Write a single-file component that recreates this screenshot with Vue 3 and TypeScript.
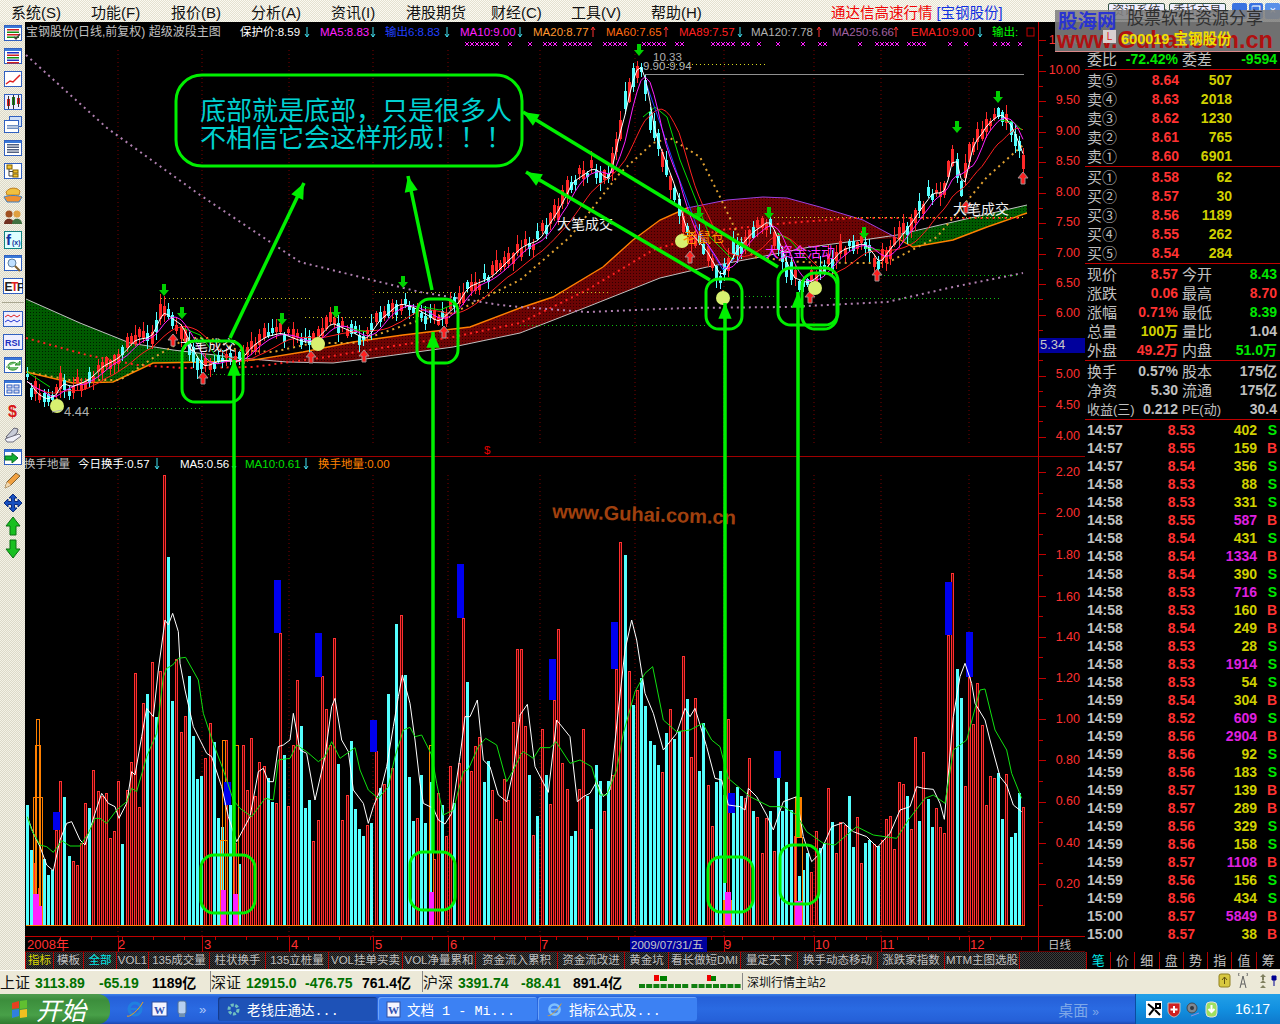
<template>
  <div class="screen">
    <header class="menu">
      <span v-for="m in menus" :key="m" class="menu-item">{{ m }}</span>
      <span class="app-title">通达信高速行情 <b>[宝钢股份]</b></span>
      <span class="menu-btn first">资讯系统</span>
      <span class="menu-btn">委托交易</span>
      <span class="win-btn">_</span>
      <span class="win-btn">❐</span>
      <span class="win-btn close">×</span>
    </header>

    <div class="body">
      <aside class="toolbar">
        <template v-for="(icon, i) in icons" :key="i">
          <div v-if="i === 12" class="tool-sep"></div>
          <svg class="tool" viewBox="0 0 20 20" width="20" height="20">
            <component :is="s.tag" v-for="(s, j) in icon" :key="j" v-bind="s.attrs">{{ s.text }}</component>
          </svg>
        </template>
      </aside>

      <div class="workspace">
        <div class="upper">
          <svg class="chart" viewBox="25 22 1060 930" width="1060" height="930">
            <defs>
              <pattern id="dRed" width="3" height="3" patternUnits="userSpaceOnUse">
                <rect width="3" height="3" fill="#6c0404" />
                <rect width="1" height="1" fill="#300000" />
              </pattern>
              <pattern id="dGreen" width="3" height="3" patternUnits="userSpaceOnUse">
                <rect width="3" height="3" fill="#005a00" />
                <rect width="1" height="1" fill="#001c00" />
              </pattern>
            </defs>
            <rect x="25" y="22" width="1060" height="930" fill="#000" />

            <!-- grid -->
            <line v-for="x in gridX" :key="'g' + x" :x1="x" :x2="x" y1="50" y2="445" class="grid" />
            <line v-for="x in gridX" :key="'h' + x" :x1="x" :x2="x" y1="475" y2="936" class="grid" />

            <!-- bands -->
            <polygon :points="bandGreenA" fill="url(#dGreen)" />
            <polygon :points="bandRed" fill="url(#dRed)" />
            <polygon :points="bandGreenB" fill="url(#dGreen)" />
            <polyline :points="grayLine" class="ln" stroke="#c0c0c0" />
            <polyline :points="orangeLine" class="ln" stroke="#ff8000" stroke-width="1.4" />
            <polyline :points="orangeTail" class="ln" stroke="#ff8000" stroke-width="1.4" />
            <polyline :points="purpleLine" class="ln" stroke="#9a40e0" />
            <polyline :points="redDots" class="dots" stroke="#ff2020" />
            <polyline :points="plumDots" class="dots" stroke="#b080b0" />
            <polyline :points="ochreDots" class="dots" stroke="#e0a030" />

            <line v-for="(d, i) in levels" :key="'l' + i" :x1="d[0]" :x2="d[1]" :y1="d[2]" :y2="d[2]" :stroke="d[3] as string" class="level" />
            <line x1="645" x2="1024" y1="74.5" y2="74.5" stroke="#909090" />

            <!-- candles -->
            <g shape-rendering="crispEdges">
              <g v-for="c in candles" :key="c.x">
                <line :x1="c.x + 0.5" :x2="c.x + 0.5" :y1="c.hi" :y2="c.lo" :stroke="c.color" />
                <rect :x="c.x - 1" :y="c.top" width="3" :height="c.h" :fill="c.color" />
              </g>
            </g>
            <polyline :points="ma20" class="ln" stroke="#ff2020" />
            <polyline v-for="(s, i) in greenBits" :key="'gb' + i" :points="s" class="ln" stroke="#00e000" />
            <polyline :points="blueLine" class="ln" stroke="#2040ff" />
            <polyline :points="ma10" class="ln" stroke="#ff20ff" />
            <polyline :points="ma5" class="ln" stroke="#fff" />

            <g v-for="(p, i) in crosses" :key="'x' + i" class="cross">
              <path :d="`M${p - 2} 42l4 4m0 -4l-4 4`" />
            </g>

            <!-- signals -->
            <polygon v-for="(p, i) in sellMarks" :key="'s' + i" :points="downArrow(p[0], p[1])" fill="#00d000" />
            <polygon v-for="(p, i) in buyMarks" :key="'b' + i" :points="upArrow(p[0], p[1])" fill="#ff2020" stroke="#a09090" />
            <g v-for="(p, i) in apples" :key="'a' + i">
              <path :d="`M${p[0]} ${p[1] - 8}v3`" stroke="#a06020" stroke-width="2" />
              <circle :cx="p[0]" :cy="p[1]" r="7" fill="#d8f070" />
            </g>

            <text x="557" y="229" class="t big white">大笔成交</text>
            <text x="953" y="214" class="t big white">大笔成交</text>
            <text x="180" y="350" class="t big white">大笔成交</text>
            <text x="683" y="242" class="t big" fill="#ff9000">老鼠仓</text>
            <text x="765" y="257" class="t big" fill="#ff30ff">大资金活动</text>
            <text x="64" y="416" class="t mid" fill="#b0b0b0">4.44</text>
            <path d="M52 412l10 -2" stroke="#b0b0b0" />
            <text x="653" y="61" class="t small" fill="#b0b0b0">10.33</text>
            <text x="643" y="70" class="t small" fill="#b0b0b0">9.90-9.94</text>
            <text x="484" y="454" class="t small" fill="#e00000">$</text>

            <!-- legends -->
            <text x="26" y="36" class="t title" fill="#c0c0c0">宝钢股份(日线,前复权) 超级波段主图</text>
            <g v-for="l in legend" :key="l.x">
              <text :x="l.x" y="36" class="t small" :fill="l.color">{{ l.label }}</text>
              <template v-if="l.ax">
                <path :d="`M${l.ax} 27v10`" :stroke="l.up ? '#ff3030' : '#40e0f0'" />
                <path :d="l.up ? `M${l.ax - 2} 30l2 -3l2 3` : `M${l.ax - 2} 34l2 3l2 -3`" fill="none" :stroke="l.up ? '#ff3030' : '#40e0f0'" />
              </template>
            </g>
            <rect x="1027" y="28" width="7" height="8" fill="none" stroke="#c00000" />

            <line x1="25" x2="1085" y1="456.5" y2="456.5" stroke="#a00000" />

            <g v-for="l in lowerLegend" :key="l.x">
              <text :x="l.x" y="468" class="t small" :fill="l.color">{{ l.label }}</text>
              <template v-if="l.ax">
                <path :d="`M${l.ax} 458v11M${l.ax - 2} 466l2 3l2 -3`" fill="none" stroke="#40e0f0" />
              </template>
            </g>

            <!-- volume -->
            <g shape-rendering="crispEdges">
              <template v-for="b in volume" :key="b.x">
                <rect v-if="b.red" :x="b.x - 0.5" :y="925.5 - b.h" width="2" :height="b.h" fill="#500000" stroke="#ff3030" />
                <rect v-else :x="b.x - 1" :y="925 - b.h" width="3" :height="b.h" fill="#54ffff" />
              </template>
              <rect v-for="(r, i) in orangeBars" :key="'o' + i" :x="r[0] + 0.5" :y="r[1] + 0.5" :width="r[2]" :height="925 - r[1]" fill="none" stroke="#ff8000" />
              <rect x="723" y="900" width="9" height="25" fill="#ff8000" />
              <rect x="795" y="797" width="7" height="40" fill="#ff8000" />
              <rect v-for="(r, i) in blueBars" :key="'bb' + i" :x="r[0]" :y="r[1]" width="7" :height="r[2]" fill="#0000f0" />
              <rect v-for="(r, i) in pinkBars" :key="'pb' + i" :x="r[0]" :y="r[1]" :width="r[2]" :height="925 - r[1]" fill="#ff20ff" />
            </g>
            <line x1="26" x2="1025" y1="925.5" y2="925.5" stroke="#ff8000" stroke-width="1.2" />
            <polyline :points="volWhite" class="ln" stroke="#fff" />
            <polyline :points="volGreen" class="ln" stroke="#10e010" />

            <text x="552" y="518" class="guhai" transform="rotate(2 552 518)">www.Guhai.com.cn</text>

            <!-- axis -->
            <line x1="1038.5" x2="1038.5" y1="22" y2="952" stroke="#c00000" />
            <path :d="axisTicks" stroke="#c00000" />
            <text v-for="t in priceAxis" :key="t[1]" x="1080" :y="t[0] + 4" class="t axis">{{ t[1] }}</text>
            <text v-for="t in turnAxis" :key="t[1]" x="1080" :y="t[0] + 4" class="t axis">{{ t[1] }}</text>
            <rect x="1039" y="338" width="46" height="15" fill="#00009c" />
            <text x="1040" y="349" class="t mid" fill="#c8c8c8">5.34</text>

            <!-- date row -->
            <line x1="25" x2="1085" y1="936.5" y2="936.5" stroke="#c00000" />
            <line x1="25" x2="1085" y1="952" y2="952" stroke="#c00000" />
            <path :d="dateTicks" stroke="#c00000" />
            <text v-for="d in dates" :key="d[1]" :x="d[0]" y="949" class="t date">{{ d[1] }}</text>
            <rect x="630" y="937" width="77" height="15" fill="#00009c" />
            <text x="631" y="949" class="t small" fill="#c8c8c8">2009/07/31/五</text>
            <text x="1048" y="949" class="t small" fill="#c0c0c0">日线</text>

            <!-- hand-drawn notes -->
            <g class="note">
              <rect x="176" y="75" width="346" height="91" rx="26" />
              <rect v-for="(r, i) in noteBoxes" :key="'n' + i" :x="r[0]" :y="r[1]" :width="r[2]" :height="r[3]" rx="13" />
            </g>
            <g v-for="(a, i) in noteArrows" :key="'na' + i">
              <line :x1="a[0]" :y1="a[1]" :x2="a[2]" :y2="a[3]" stroke="#00f000" stroke-width="3.5" />
              <polygon :points="head(a)" fill="#00f000" />
            </g>
            <text x="200" y="120" class="note-text">底部就是底部，只是很多人</text>
            <text x="200" y="147" class="note-text">不相信它会这样形成！！！</text>
          </svg>

          <section class="quote">
            <div class="q-head"></div>
            <div class="q-row top"><span>委比</span><b class="g">-72.42%</b><span class="l2">委差</span><b class="g">-9594</b></div>
            <div class="q-block">
              <div v-for="o in asks" :key="o[0]" class="order">
                <span>{{ o[0] }}</span><b class="r">{{ o[1] }}</b><b class="y">{{ o[2] }}</b>
              </div>
            </div>
            <div class="q-block">
              <div v-for="o in bids" :key="o[0]" class="order">
                <span>{{ o[0] }}</span><b class="r">{{ o[1] }}</b><b class="y">{{ o[2] }}</b>
              </div>
            </div>
            <div class="q-block">
              <div v-for="r in stats" :key="r[0]" class="q-row">
                <span>{{ r[0] }}</span><b :class="r[2]">{{ r[1] }}</b><span class="l2">{{ r[3] }}</span><b :class="r[5]">{{ r[4] }}</b>
              </div>
            </div>
            <div class="q-block">
              <div v-for="r in funds" :key="r[0]" class="q-row fund">
                <span>{{ r[0] }}</span><b class="w">{{ r[1] }}</b><span class="l2">{{ r[2] }}</span><b class="w">{{ r[3] }}</b>
              </div>
            </div>
            <div class="ticks">
              <div v-for="(t, i) in ticks" :key="i" class="tick">
                <b class="w">{{ t[0] }}</b>
                <b class="r">{{ t[1] }}</b>
                <b :class="Number(t[2]) >= 500 ? 'm' : 'y'">{{ t[2] }}</b>
                <b :class="t[3] === 'S' ? 'g' : 'r'">{{ t[3] }}</b>
              </div>
            </div>
          </section>
        </div>

        <nav class="tabs">
          <span v-for="t in tabs" :key="t[0]" class="tab" :class="t[2]" :style="{ width: t[1] + 'px' }">{{ t[0] }}</span>
          <span class="tab-fill"></span>
          <span v-for="t in sideTabs" :key="t" class="side-tab" :class="{ on: t === '笔' }">{{ t }}</span>
        </nav>
      </div>
    </div>

    <footer class="status">
      <div class="idx"><span class="n1">上证</span><b class="up v1">3113.89</b><b class="up v2">-65.19</b><b class="amt">1189亿</b></div>
      <div class="idx"><span class="n1">深证</span><b class="up v1">12915.0</b><b class="up v2">-476.75</b><b class="amt">761.4亿</b></div>
      <div class="idx"><span class="n1">沪深</span><b class="up v1">3391.74</b><b class="up v2">-88.41</b><b class="amt">891.4亿</b></div>
      <svg class="signal" width="102" height="16" viewBox="0 0 102 16">
        <rect x="15" y="2" width="5" height="6" fill="#f00000" />
        <rect x="21" y="3" width="7" height="5" fill="#008000" />
        <rect x="68" y="2" width="4" height="6" fill="#f00000" />
        <rect x="72" y="3" width="5" height="5" fill="#008000" />
        <rect v-for="n in 14" :key="n" :x="(n - 1) * 7.2 + (n > 7 ? 2 : 0)" y="11" width="6" height="4" fill="#108010" />
      </svg>
      <span class="station">深圳行情主站2</span>
      <svg class="stat-icons" width="60" height="20" viewBox="0 0 60 20">
        <rect x="1" y="3" width="11" height="13" rx="2" fill="#d8c840" stroke="#908020" />
        <path d="M6.500 6v7M4 9l2.500 -3l2.500 3" stroke="#605010" fill="none" />
        <path d="M22 17l3 -12l3 12M23 13h4M21 5a3 3 0 0 1 0 -3M29 5a3 3 0 0 0 0 -3" stroke="#606060" fill="none" />
        <path d="M42 6l3 -3l3 3h-2v3h-2v-3zM42 12l3 -3l3 3zM42 17l3 -3l3 3z" fill="#808060" />
        <path d="M56 9v6M54 5h4v4h-4z" fill="#000090" stroke="#000090" />
      </svg>
    </footer>

    <footer class="taskbar">
      <div class="start">
        <svg width="20" height="20" viewBox="0 0 20 20">
          <path d="M2 4l7 -2v7l-7 1z" fill="#e84020" />
          <path d="M10 2l7 -1v8l-7 1z" fill="#60c030" />
          <path d="M2 11l7 -1v7l-7 2z" fill="#3080e0" />
          <path d="M10 11l7 -1v8l-7 1z" fill="#f0c020" />
        </svg>
        <span>开始</span>
      </div>
      <div class="quick">
        <svg width="20" height="20" viewBox="0 0 20 20">
          <circle cx="10" cy="10" r="6" fill="none" stroke="#2080e0" stroke-width="3" />
          <path d="M5 10h10" stroke="#2080e0" stroke-width="2" />
          <path d="M2 17c2 2 12 -6 16 -14" stroke="#e8a020" fill="none" />
        </svg>
        <svg width="18" height="18" viewBox="0 0 18 18">
          <rect x="1" y="2" width="15" height="14" fill="#f4f4ff" stroke="#3050a0" />
          <text x="3" y="14" class="w-mark">W</text>
        </svg>
        <svg width="14" height="20" viewBox="0 0 14 20">
          <rect x="3" y="2" width="8" height="13" rx="2" fill="#b8d0f0" stroke="#507098" />
          <rect x="4" y="15" width="6" height="3" fill="#7090b0" />
        </svg>
        <span class="chev">»</span>
      </div>
      <div class="task active">
        <svg width="15" height="15" viewBox="0 0 15 15"><circle cx="7.500" cy="7.500" r="4.500" fill="none" stroke="#70c0c0" stroke-width="3" stroke-dasharray="3 1.500" /></svg>
        <span>老钱庄通达...</span>
      </div>
      <div class="task">
        <svg width="15" height="17" viewBox="0 0 15 17"><rect x="1" y="1" width="13" height="15" fill="#f4f4ff" stroke="#3050a0" /><text x="2" y="13" class="w-mark">W</text></svg>
        <span>文档 1 - Mi...</span>
      </div>
      <div class="task">
        <svg width="17" height="17" viewBox="0 0 20 20">
          <circle cx="10" cy="10" r="6" fill="none" stroke="#7fc0ff" stroke-width="3" />
          <path d="M5 10h10" stroke="#7fc0ff" stroke-width="2" />
          <path d="M2 17c2 2 12 -6 16 -14" stroke="#e8a020" fill="none" />
        </svg>
        <span>指标公式及...</span>
      </div>
      <span class="desk">桌面 <i>»</i></span>
      <div class="tray">
        <svg width="16" height="17" viewBox="0 0 16 17"><rect width="16" height="17" fill="#fff" /><path d="M2 3l6 5l-5 6M9 9l5 5M10 3h4v4h-4z" stroke="#000" stroke-width="2" fill="none" /></svg>
        <svg width="14" height="17" viewBox="0 0 14 17"><path d="M1 2h12v8c0 3 -4 6 -6 6s-6 -3 -6 -6z" fill="#d02020" stroke="#c0c0c0" /><path d="M7 5v7M3.500 8.500h7" stroke="#fff" stroke-width="2" /></svg>
        <svg width="14" height="17" viewBox="0 0 14 17"><circle cx="6" cy="7" r="5" fill="#808890" stroke="#404850" /><circle cx="6" cy="7" r="2" fill="#303840" /><path d="M5 15l8 -3" stroke="#9090e0" /></svg>
        <svg width="13" height="17" viewBox="0 0 13 17"><rect x="1" y="1" width="11" height="15" rx="4" fill="#a0e060" stroke="#e0e0e0" /><path d="M6.500 4v7M3.500 8l3 3l3 -3" stroke="#fff" stroke-width="2" fill="none" /></svg>
        <span class="clock">16:17</span>
      </div>
    </footer>

    <!-- site watermark pasted over the window corner -->
    <div class="stamp">
      <b class="stamp-logo">股海网</b>
      <span class="stamp-slogan">股票软件资源分享</span>
      <b class="stamp-url">www.Guhai.com.cn</b>
      <span class="stamp-l">L</span>
      <b class="stamp-code">600019 宝钢股份</b>
    </div>
  </div>
</template>

<script setup lang="ts">
type Pt = number[]

interface Shape {
  tag: string
  attrs: Record<string, string | number>
  text?: string
}

const menus = ['系统(S)', '功能(F)', '报价(B)', '分析(A)', '资讯(I)', '港股期货', '财经(C)', '工具(V)', '帮助(H)']

// ---- sidebar icons
const r = (x: number, y: number, w: number, h: number, fill: string, stroke = 'none'): Shape => ({
  tag: 'rect',
  attrs: { x, y, width: w, height: h, fill, stroke },
})
const p = (d: string, fill = 'none', stroke = 'none', sw = 1): Shape => ({
  tag: 'path',
  attrs: { d, fill, stroke, 'stroke-width': sw },
})
const t = (x: number, y: number, text: string, fill: string, size: number): Shape => ({
  tag: 'text',
  attrs: { x, y, fill, 'font-size': size, 'font-weight': 700, 'font-family': 'Liberation Sans' },
  text,
})
const frame = [r(1.5, 2.5, 17, 15, '#fff', '#3060c0'), r(2, 3, 16, 2, '#3878d8')]
const rows = (colors: string[]) => colors.map((c, i) => r(4, 6 + i * 2.5, 12, 1.5, c))

const icons: Shape[][] = [
  [...frame, ...rows(['#d02020', '#109010', '#d02020', '#109010']), p('M11 14l2 2l4 -5', 'none', '#404040', 1.5)],
  [...frame, ...rows(['#2030c0', '#d02020', '#109010', '#2030c0', '#d02020'])],
  [r(1.5, 2.5, 17, 15, '#fff', '#3060c0'), p('M3 15l4 -3l3 1l7 -7', 'none', '#e02020', 1.5)],
  [r(1.5, 2.5, 17, 15, '#eef', '#3060c0'), r(4, 7, 3, 7, '#e02020'), r(9, 5, 3, 8, '#108010'), r(14, 6, 3, 6, '#e02020'), p('M5.500 4v13M10.500 3v14M15.500 3v12', 'none', '#303030')],
  [r(6.500, 1.500, 12, 10, '#cfe0f8', '#3060c0'), r(1.5, 5.5, 14, 12, '#fff', '#3060c0'), ...rows(['#7090c0', '#7090c0']).map((s) => ({ ...s, attrs: { ...s.attrs, y: Number(s.attrs.y) + 4 } }))],
  [...frame, ...rows(['#506080', '#506080', '#506080', '#506080'])],
  [r(1.5, 2.5, 17, 15, '#fff', '#3060c0'), r(4, 4, 5, 4, '#f0c030', '#806000'), r(10, 9, 5, 3, '#f0c030', '#806000'), r(10, 13, 5, 3, '#f0c030', '#806000'), p('M6 8v7h4M6 10.500h4', 'none', '#404040')],
  [p('M3 8c3 -5 11 -5 14 -1l-1 4h-12z', '#f0c040', '#c08020'), p('M1 13c4 -2 14 -2 18 0l-3 5h-12z', '#f09030', '#4080c0')],
  [{ tag: 'circle', attrs: { cx: 6, cy: 7, r: 3.5, fill: '#a05020' } }, { tag: 'circle', attrs: { cx: 14, cy: 7, r: 3.5, fill: '#e0a040' } }, p('M1 17c0 -7 10 -7 10 0z', '#703020'), p('M9 17c0 -7 10 -7 10 0z', '#407040')],
  [r(1.5, 1.5, 17, 17, '#dff', '#108080'), t(3, 15, 'f', '#1030a0', 15), t(9, 15, '(x)', '#1030a0', 7)],
  [...frame, { tag: 'circle', attrs: { cx: 9, cy: 10, r: 4, fill: '#c0e0ff', stroke: '#6080a0' } }, p('M12 13l5 5', 'none', '#806030', 2)],
  [r(0.5, 2.5, 19, 15, '#fff', '#3060c0'), t(1.5, 15, 'E', '#202020', 12), t(8, 15, 'T', '#e02020', 12), t(14, 15, 'F', '#202020', 11)],
  [r(0.5, 2.5, 19, 15, '#eef', '#3060c0'), p('M2 8l3 -2l3 2l3 -2l3 2l3 -2', 'none', '#e02020'), p('M2 13l3 -2l3 2l3 -2l3 2l3 -2', 'none', '#2030d0')],
  [r(0.5, 2.5, 19, 15, '#eef', '#3060c0'), t(2, 14, 'RSI', '#2030c0', 9)],
  [...frame, p('M5 11c0 -4 7 -5 9 -2l-2 1h5v-4l-1 1M15 12c-1 4 -8 4 -10 1l2 -1h-4', '#70c070', '#309030')],
  [...frame, r(4, 7, 5, 3, '#dde', '#3060c0'), r(11, 7, 5, 3, '#dde', '#3060c0'), r(4, 12, 5, 3, '#dde', '#3060c0'), r(11, 12, 5, 3, '#dde', '#3060c0')],
  [t(5, 16, '$', '#d81818', 16)],
  [p('M3 13l8 -9l4 1l-1 4l-7 6z', '#c8ccd8', '#606070'), p('M2 15l5 -2l9 -3l2 2l-8 6h-6z', '#f0f0f8', '#707080')],
  [...frame, p('M2 9h7v-3l6 5l-6 5v-3h-7z', '#10b030', '#087020')],
  [p('M2 18l2 -6l9 -9l4 3l-9 9z', '#f0a040', '#806030'), p('M2 18l2 -6l4 3z', '#f0d8b0')],
  [p('M10 1l4 4h-2.500v3.500h3.500v-2.500l4 4l-4 4v-2.500h-3.500v3.500h2.500l-4 4l-4 -4h2.500v-3.500h-3.500v2.500l-4 -4l4 -4v2.500h3.500v-3.500h-2.500z', '#1850c0', '#0c2c80')],
  [p('M10 1l7 9h-4v9h-6v-9h-4z', '#18c020', '#087010')],
  [p('M10 19l7 -9h-4v-9h-6v9h-4z', '#18c020', '#087010')],
]

// ---- volume panel, red > 0, cyan < 0, heights in pixels
const bars: number[] = [
  -120, -75, 62, 37, -66, -50, -55, 95, 144, -128, -69, 64, 60, 82, 122, -117, 155, 134, 129, 132, 87, 94, 144, -81, 135,
  163, 252, 118, 222, -231, 263, -208, 254, 450, -368, -224, 266, 193, 209, -249, -189, -146, -149, 167, 202, -183, -107,
  -98, 185, -120, 82, -61, 180, 135, 187, 129, 163, 159, -147, -123, 122, 292, -170, 119, 180, 245, -199, -117, -125, 84,
  105, 249, 216, 180, 287, -161, 105, 130, -184, -116, -96, -89, 100, -102, 174, -137, 141, -231, 157, -301, 310, -250,
  -148, -104, 107, -150, -102, -143, 66, 132, -120, 89, 159, -122, 162, 307, -243, 154, 179, 188, -143, -164, 135, 106,
  104, 146, 125, 203, 276, 276, 199, -150, 90, -109, 196, -150, 121, 225, 296, 162, 136, -89, -94, 136, 196, -129, 96,
  -160, -144, 114, -144, 150, 256, 383, -370, 254, -220, 235, -247, -219, -184, -180, -160, 153, -192, 216, -186, -194,
  269, -226, 168, 227, -154, -202, 140, 99, -143, -154, -130, 206, -112, -138, -129, 127, 167, -114, 108, 72, 107, -114,
  74, -147, -114, -143, -115, 89, -49, -55, -72, 53, 94, -77, -82, 137, -103, 72, 103, 100, -129, -78, 108, 62, -82, -85,
  81, -79, 85, 106, 109, 76, 143, 141, -129, 96, 188, -104, 173, -126, -98, 117, 98, 92, 290, 352, -256, -227, 139, 249,
  201, 242, 200, 120, 149, 147, -152, -106, 151, -88, -92, -132, 118,
]
const barX = (i: number) => Math.round(27 + (i * 996) / (bars.length - 1))
const volume = bars.map((v, i) => ({ x: barX(i), h: Math.abs(v), red: v > 0 }))

const blueBars: Pt[] = [
  [53, 812, 18], [224, 782, 23], [274, 580, 53], [315, 633, 44], [370, 720, 32], [457, 564, 54],
  [549, 659, 41], [611, 622, 47], [728, 793, 20], [774, 751, 27], [945, 582, 53], [966, 632, 45],
]
const pinkBars: Pt[] = [
  [33, 894, 6], [38, 906, 4], [221, 890, 5], [233, 894, 5], [429, 892, 5], [725, 892, 6], [795, 901, 7],
]
const orangeBars: Pt[] = [
  [33, 797, 9], [35, 745, 5], [36, 719, 3], [220, 840, 7], [222, 740, 3], [223, 719, 0], [233, 745, 5],
  [429, 745, 4], [431, 719, 0], [727, 719, 0], [795, 837, 7],
]

// crop readings: series were traced from 3x views, offset back to page pixels
const fromCrop = (list: number[], ox: number, oy: number) => {
  const out: string[] = []
  for (let i = 0; i < list.length; i += 2) out.push(`${ox + list[i] / 3},${oy + list[i + 1] / 3}`)
  return out.join(' ')
}
const whiteA = [22,1100,40,1150,60,1190,80,1245,100,1262,120,1170,140,1120,155,1115,180,1170,195,1185,225,1090,245,1030,265,1060,285,1070,297,1105,320,1060,335,965,345,975,365,860,380,775,400,800,415,660,435,510,445,525,458,490,475,545,480,640,495,720,520,830,560,910,575,920,605,1010,625,1100,650,1175,690,1100,715,965,730,955,745,995,760,995,775,890,790,885,810,870,820,790,840,900,860,910,885,1050,915,920,935,770,945,745,965,870,985,905,1000,1020,1030,1060,1045,1120,1060,1070,1085,1010,1100,950,1120,830,1135,740,1147,675,1170,760,1185,870,1200,1000,1210,1060,1240,1075,1255,1110,1275,1122,1295,1090,1320,920,1335,800,1350,800,1372,750,1390,930,1410,950,1435,1035,1460,1055,1480,960,1500,800]
const whiteB = [0,795,22,763,45,950,85,1027,110,810,150,860,172,1055,190,1040,210,1030,230,995,250,1040,270,1020,295,780,315,600,335,510,350,570,375,730,400,790,430,900,470,850,495,775,510,800,525,775,560,890,585,985,605,990,625,1065,660,1070,675,1080,685,1015,710,1040,740,1095,760,1140,790,1055,830,1040,850,1160,875,1235,900,1210,935,1130,970,1118,1000,1145,1040,1160,1072,1192,1110,1150,1140,1080,1170,1070,1190,1010,1210,1015,1240,1018,1260,1060,1273,1108,1300,800,1320,680,1335,640,1355,700,1365,760,1395,810,1410,870,1440,980,1460,1005,1480,1065,1505,1085]
const greenA = [22,1100,35,1140,60,1185,80,1190,100,1207,125,1172,150,1188,180,1188,205,1150,225,1105,240,1105,260,1120,290,1080,320,1055,335,1015,350,1025,380,920,410,850,430,680,440,655,458,645,475,625,497,622,535,690,550,790,580,880,610,960,640,1050,660,1075,695,1100,735,1045,760,1050,775,930,810,925,830,885,860,905,895,935,915,920,935,875,960,925,1005,893,1020,960,1045,1020,1075,1045,1105,1010,1125,920,1150,840,1170,832,1185,860,1205,855,1235,915,1250,1000,1270,1095,1300,1080,1330,965,1345,958,1375,890,1397,865,1430,885,1460,995,1480,960,1500,920]
const greenB = [0,915,10,905,40,925,60,893,90,893,108,875,150,940,180,930,215,950,240,1035,260,1035,290,960,310,850,345,725,375,670,398,650,430,810,470,845,510,840,548,820,575,870,600,890,625,985,690,1040,750,1070,790,1070,830,1095,860,1145,910,1180,945,1185,1010,1130,1060,1155,1130,1165,1165,1110,1215,1045,1240,1035,1275,1060,1300,900,1340,870,1380,720,1395,717,1425,840,1460,900,1475,970,1505,1045]
const volWhite = `${fromCrop(whiteA, 20, 450)} ${fromCrop(whiteB, 520, 450)}`
const volGreen = `${fromCrop(greenA, 20, 450)} ${fromCrop(greenB, 520, 450)}`

// ---- price panel
const pricePath: Pt[] = [
  [26,380],[35,393],[45,400],[57,393],[60,383],[70,387],[87,380],[100,367],[117,358],[133,340],[150,337],[162,310],[168,317],[180,325],[193,353],[202,367],[220,360],[237,362],[250,347],[263,337],[280,333],[290,338],[307,343],[317,337],[330,323],[350,332],[365,340],[375,323],[398,303],[413,308],[437,322],[453,307],[467,287],[490,277],[520,247],[537,240],[557,210],[570,183],[593,167],[607,182],[618,133],[633,73],[640,63],[645,87],[653,133],[667,170],[677,197],[683,227],[702,247],[720,277],[733,253],[750,233],[768,220],[778,243],[790,277],[807,283],[820,273],[840,250],[863,243],[878,263],[890,247],[907,227],[930,193],[943,193],[953,150],[962,193],[970,147],[987,123],[1000,113],[1010,127],[1020,150],[1024,163],
]
const interp = (path: Pt[], x: number) => {
  for (let i = 1; i < path.length; i++) {
    if (x <= path[i][0]) {
      const [x0, y0] = path[i - 1]
      const [x1, y1] = path[i]
      return y0 + ((y1 - y0) * (x - x0)) / (x1 - x0)
    }
  }
  return path[path.length - 1][1]
}
const rnd = (i: number) => {
  const v = Math.sin(i * 12.9898) * 43758.5453
  return v - Math.floor(v)
}
const closes = volume.map((b, i) => interp(pricePath, b.x) + (rnd(i) - 0.5) * 12)
const smooth = volume.map((b) => interp(pricePath, b.x))
const candles = volume.map((b, i) => {
  const steep = Math.abs(smooth[i] - (smooth[i - 1] ?? smooth[i]))
  const h = Math.round(2 + rnd(i + 300) * 7 + Math.min(steep, 14) * 0.8)
  const top = Math.round(closes[i] - h / 2)
  return {
    x: b.x,
    top,
    h,
    hi: top - Math.round(1 + rnd(i + 600) * 9),
    lo: top + h + Math.round(1 + rnd(i + 900) * 8),
    color: b.red ? '#ff2828' : '#54ffff',
  }
})
const sma = (n: number) =>
  volume
    .map((b, i) => {
      const from = Math.max(0, i - n + 1)
      const part = smooth.slice(from, i + 1)
      return `${b.x},${(part.reduce((a, c) => a + c, 0) / part.length).toFixed(1)}`
    })
    .join(' ')
const ma5 = sma(2)
const ma10 = sma(5)
const ma20 = sma(12)

const join = (list: Pt[]) => list.map((q) => q.join(',')).join(' ')
const grayPts: Pt[] = [[26,299],[80,323],[130,343],[173,350],[240,358],[287,362],[333,363],[373,358],[453,347],[520,333],[587,307],[660,278],[707,267],[760,257],[810,247],[863,240],[897,235],[953,222],[1027,205]]
const orangePts: Pt[] = [[26,372],[73,383],[113,382],[153,363],[207,362],[253,360],[303,352],[353,342],[403,335],[470,327],[520,308],[553,297],[603,267],[633,240],[660,220],[687,208]]
const purplePts: Pt[] = [[687,208],[727,200],[763,197],[787,198],[820,207],[863,220],[897,238]]
const grayLine = join(grayPts)
const orangeLine = join(orangePts)
const orangeTail = join([[897,238],[913,247],[953,240],[987,227],[1027,213]])
const purpleLine = join(purplePts)
const bandGreenA = join([...grayPts.slice(0, 5), [240, 360], [207, 362], [153, 363], [113, 382], [73, 383], [26, 372]])
const bandRed = join([[240, 360], ...orangePts.slice(5), ...purplePts, [863, 240], [810, 247], [760, 257], [707, 267], [660, 278], [587, 307], [520, 333], [453, 347], [373, 358], [333, 363], [287, 362]])
const bandGreenB = join([[897, 236], [953, 222], [1027, 205], [1027, 213], [987, 227], [953, 240], [913, 247]])

const redDots = join([[26,338],[87,355],[137,365],[183,368],[253,367],[320,358],[387,347],[453,337],[520,323],[587,290],[653,250],[720,230],[787,223],[853,218],[1020,218]])
const plumDots = join([[26,55],[107,128],[200,195],[300,262],[420,292],[500,305],[520,307],[587,312],[687,308],[787,307],[887,302],[953,287],[1023,273]])
const ochreDots = join([[27,372],[70,380],[120,380],[153,358],[187,338],[210,338],[237,350],[273,352],[313,343],[353,343],[420,320],[453,313],[520,280],[570,237],[620,173],[653,143],[670,138],[700,157],[720,197],[737,233],[753,257],[800,262],[853,263],[887,263],[937,237],[987,177],[1023,145]])
const blueLine = join([[645,80],[660,123],[677,173],[697,227],[723,270],[735,258]])
const greenBits = [
  join([[27,372],[50,387]]),
  join([[183,328],[200,335],[217,357]]),
  join([[348,328],[367,332]]),
  join([[423,307],[440,310],[457,303]]),
  join([[643,117],[655,107],[667,117],[680,160],[697,203],[710,237],[733,260]]),
  join([[777,233],[790,240],[807,260]]),
  join([[865,248],[880,250]]),
  join([[1000,120],[1013,122],[1022,130]]),
]
const levels: (number | string)[][] = [
  [161,312,298.5,'#c8c820'],[87,200,408.5,'#10c010'],[200,362,374.5,'#10c010'],[305,450,317.5,'#c8c820'],
  [660,765,64.5,'#d8d820'],[770,1025,217.5,'#d8d820'],[880,1020,275.5,'#10c010'],[733,780,296.5,'#10c010'],
  [830,1000,298.5,'#10c010'],[520,706,325.5,'#10c010'],[375,610,292.5,'#c8c820'],
]
const gridX = [118, 202, 289, 373, 448, 540, 635, 724, 814, 881, 969]

const crossSpans: Pt[] = [[467,500],[510,510],[530,530],[545,555],[565,590],[605,625],[644,667],[677,685],[713,734],[743,750],[759,759],[778,778],[803,803],[820,826],[860,860],[877,897],[909,926],[950,954],[966,966],[995,995],[1003,1011],[1020,1020]]
const crosses = crossSpans.flatMap(([a, b]) => {
  const out: number[] = []
  for (let x = a; x <= b; x += 5) out.push(x)
  return out
})

const sellMarks: Pt[] = [[164,290],[182,313],[282,319],[336,312],[403,282],[639,50],[699,213],[769,213],[864,233],[957,127],[998,97]]
const buyMarks: Pt[] = [[173,340],[203,378],[311,357],[364,356],[444,332],[690,257],[810,297],[877,275],[966,207],[1023,178]]
const apples: Pt[] = [[57,406],[318,344],[682,241],[723,298],[815,288]]
const downArrow = (x: number, y: number) =>
  `${x - 2},${y - 6} ${x + 2},${y - 6} ${x + 2},${y} ${x + 5},${y} ${x},${y + 6} ${x - 5},${y}  ${x - 2},${y}`
const upArrow = (x: number, y: number) =>
  `${x - 2},${y + 6} ${x + 2},${y + 6} ${x + 2},${y} ${x + 5},${y} ${x},${y - 6} ${x - 5},${y}  ${x - 2},${y}`

const legend = [
  { x: 240, label: '保护价:8.59', color: '#fff', ax: 307, up: false },
  { x: 320, label: 'MA5:8.83', color: '#ff20ff', ax: 373, up: false },
  { x: 385, label: '输出6:8.83', color: '#2040ff', ax: 447, up: false },
  { x: 460, label: 'MA10:9.00', color: '#ff20ff', ax: 520, up: false },
  { x: 533, label: 'MA20:8.77', color: '#ff9830', ax: 593, up: true },
  { x: 606, label: 'MA60:7.65', color: '#ff6a10', ax: 666, up: true },
  { x: 679, label: 'MA89:7.57', color: '#ff2020', ax: 740, up: false },
  { x: 751, label: 'MA120:7.78', color: '#b0b0b0', ax: 819, up: true },
  { x: 832, label: 'MA250:6.66', color: '#a060a0', ax: 896, up: true },
  { x: 911, label: 'EMA10:9.00', color: '#ff2020', ax: 980, up: false },
  { x: 992, label: '输出:', color: '#00ff00', ax: 0, up: false },
]
const lowerLegend = [
  { x: 24, label: '换手地量', color: '#c0c0c0', ax: 0 },
  { x: 78, label: '今日换手:0.57', color: '#fff', ax: 157 },
  { x: 180, label: 'MA5:0.56', color: '#fff', ax: 234 },
  { x: 245, label: 'MA10:0.61', color: '#00e000', ax: 306 },
  { x: 318, label: '换手地量:0.00', color: '#ff8000', ax: 0 },
]

const priceAxis: [number, string][] = [
  [40,'10.50'],[70,'10.00'],[100,'9.50'],[131,'9.00'],[161,'8.50'],[192,'8.00'],[222,'7.50'],[253,'7.00'],[283,'6.50'],[313,'6.00'],[374,'5.00'],[405,'4.50'],[436,'4.00'],
]
const turnAxis: [number, string][] = [
  [472,'2.20'],[513,'2.00'],[555,'1.80'],[597,'1.60'],[637,'1.40'],[678,'1.20'],[719,'1.00'],[760,'0.80'],[801,'0.60'],[843,'0.40'],[884,'0.20'],
]
const axisTicks = (() => {
  let d = ''
  for (let y = 40; y < 450; y += 15.25) d += `M1039 ${Math.round(y) + 0.5}h${Math.abs(y - 40) % 30.5 < 1 ? 7 : 4}`
  for (let y = 472; y < 925; y += 20.6) d += `M1039 ${Math.round(y) + 0.5}h${Math.abs(y - 472) % 41.2 < 1 ? 7 : 4}`
  return d
})()
const dates: [number, string][] = [[27,'2008年'],[118,'2'],[204,'3'],[291,'4'],[375,'5'],[450,'6'],[541,'7'],[724,'9'],[815,'10'],[881,'11'],[970,'12']]
const dateTicks = (() => {
  let d = ''
  for (const x of gridX) d += `M${x + 0.5} 937v15`
  for (let x = 60; x < 1030; x += 31) d += `M${x + 0.5} 937v3`
  return d
})()

const noteBoxes: Pt[] = [
  [182, 341, 61, 61], [417, 299, 41, 64], [706, 279, 36, 50], [778, 268, 60, 57], [802, 273, 35, 56],
  [201, 855, 54, 58], [410, 852, 45, 58], [708, 857, 45, 55], [780, 845, 39, 59],
]
const noteArrows: Pt[] = [
  [230, 338, 304, 183], [432, 290, 408, 176], [778, 267, 523, 112], [710, 280, 526, 172],
  [234, 855, 234, 360], [433, 852, 433, 332], [725, 883, 725, 303], [798, 837, 798, 292],
]
const head = (a: Pt) => {
  const ang = Math.atan2(a[3] - a[1], a[2] - a[0])
  const size = 17
  const l = [a[2] - size * Math.cos(ang - 0.4), a[3] - size * Math.sin(ang - 0.4)]
  const k = [a[2] - size * Math.cos(ang + 0.4), a[3] - size * Math.sin(ang + 0.4)]
  return `${a[2]},${a[3]} ${l[0]},${l[1]} ${k[0]},${k[1]}`
}

// ---- quote column
const asks = [['卖⑤','8.64','507'],['卖④','8.63','2018'],['卖③','8.62','1230'],['卖②','8.61','765'],['卖①','8.60','6901']]
const bids = [['买①','8.58','62'],['买②','8.57','30'],['买③','8.56','1189'],['买④','8.55','262'],['买⑤','8.54','284']]
const stats = [
  ['现价','8.57','r','今开','8.43','g'],
  ['涨跌','0.06','r','最高','8.70','r'],
  ['涨幅','0.71%','r','最低','8.39','g'],
  ['总量','100万','y','量比','1.04','w'],
  ['外盘','49.2万','r','内盘','51.0万','g'],
]
const funds = [['换手','0.57%','股本','175亿'],['净资','5.30','流通','175亿'],['收益(三)','0.212','PE(动)','30.4']]
const ticks = [
  ['14:57','8.53','402','S'],['14:57','8.55','159','B'],['14:57','8.54','356','S'],['14:58','8.53','88','S'],
  ['14:58','8.53','331','S'],['14:58','8.55','587','B'],['14:58','8.54','431','S'],['14:58','8.54','1334','B'],
  ['14:58','8.54','390','S'],['14:58','8.53','716','S'],['14:58','8.53','160','B'],['14:58','8.54','249','B'],
  ['14:58','8.53','28','S'],['14:58','8.53','1914','S'],['14:58','8.53','54','S'],['14:59','8.54','304','B'],
  ['14:59','8.52','609','S'],['14:59','8.56','2904','B'],['14:59','8.56','92','S'],['14:59','8.56','183','S'],
  ['14:59','8.57','139','B'],['14:59','8.57','289','B'],['14:59','8.56','329','S'],['14:59','8.56','158','S'],
  ['14:59','8.57','1108','B'],['14:59','8.56','156','S'],['14:59','8.56','434','S'],['15:00','8.57','5849','B'],
  ['15:00','8.57','38','B'],
]

const tabs: [string, number, string][] = [
  ['指标',28,'yellow'],['模板',30,''],['全部',33,'cyan'],['VOL1',32,''],['135成交量',61,''],['柱状换手',56,''],['135立桩量',63,''],
  ['VOL挂单买卖',74,''],['VOL净量累和',73,''],['资金流入累积',82,''],['资金流改进',67,''],['黄金坑',44,''],['看长做短DMI',72,''],
  ['量定天下',57,''],['换手动态移动',80,''],['涨跌家指数',67,''],['MTM主图选股',75,''],
]
const sideTabs = ['笔','价','细','盘','势','指','值','筹']
</script>

<style>
html,
body {
  margin: 0;
  background: #000;
}
</style>

<style scoped>
.screen {
  position: relative;
  width: 1280px;
  height: 1024px;
  overflow: hidden;
  display: flex;
  flex-direction: column;
  font-family: 'Liberation Sans', 'Noto Sans CJK SC', sans-serif;
  background: #ece9d8;
}

.menu {
  height: 22px;
  display: flex;
  align-items: center;
  padding-left: 11px;
  gap: 27px;
  font-size: 15px;
  color: #111;
  background: repeating-conic-gradient(#e4e1d0 0 25%, #fbfaf2 0 50%) 0 0 / 2px 2px;
  white-space: nowrap;
}

.menu-item {
  width: 53px;
  flex: none;
}

.menu-item:nth-child(6) {
  margin-left: -5px;
  width: 58px;
}

.app-title {
  margin-left: 100px;
  color: #f00000;
  font-size: 14.500px;
}

.app-title b {
  color: #1030e0;
  font-weight: 400;
}

.menu-btn {
  height: 15px;
  width: 56px;
  margin-left: -23px;
  border: 1px solid #305040;
  border-radius: 2px;
  font-size: 12px;
  line-height: 15px;
  text-align: center;
  background: #eef;
  color: #333;
}

.menu-btn.first {
  margin-left: 78px;
}

.win-btn {
  width: 15px;
  height: 16px;
  margin-left: -25px;
  background: #3a72e0;
  color: #fff;
  font-size: 11px;
  line-height: 14px;
  text-align: center;
  border-radius: 2px;
}

.menu-btn + .win-btn {
  margin-left: -21px;
}

.win-btn.close {
  background: #5a90e8;
}

.body {
  display: flex;
  height: 948px;
}

.toolbar {
  width: 25px;
  flex: none;
  display: flex;
  flex-direction: column;
  align-items: center;
  gap: 3px;
  padding-top: 1px;
  box-sizing: border-box;
  background: repeating-conic-gradient(#dcd9c8 0 25%, #f4f2e6 0 50%) 0 0 / 2px 2px;
}

.tool {
  flex: none;
  display: block;
}

.tool-sep {
  width: 22px;
  height: 1px;
  margin: 3px 0;
  background: #a8a690;
  flex: none;
}

.workspace {
  width: 1255px;
  display: flex;
  flex-direction: column;
}

.upper {
  display: flex;
  height: 930px;
}

.chart {
  display: block;
  flex: none;
}

.grid {
  stroke: #7c0000;
  stroke-dasharray: 1 3;
}

.ln {
  fill: none;
}

.dots {
  fill: none;
  stroke-width: 2;
  stroke-dasharray: 2 4;
}

.level {
  stroke-dasharray: 1 3;
}

.cross path {
  stroke: #ff20ff;
  fill: none;
}

.t {
  font-family: 'Liberation Sans', 'Noto Sans CJK SC', sans-serif;
}

.small {
  font-size: 11.500px;
}

.title {
  font-size: 12px;
}

.mid {
  font-size: 13px;
}

.big {
  font-size: 14px;
}

.white {
  fill: #f0f0f0;
}

.axis {
  font-size: 12.500px;
  fill: #ff3030;
  text-anchor: end;
}

.date {
  font-size: 13px;
  fill: #ff3030;
}

.guhai {
  font: 700 20px 'Liberation Sans', sans-serif;
  fill: #a0400e;
}

.note rect {
  fill: none;
  stroke: #00f000;
  stroke-width: 3;
}

.note-text {
  font: 400 26px 'Noto Sans CJK SC', sans-serif;
  fill: #00d0d0;
}

.quote {
  width: 195px;
  flex: none;
  box-sizing: border-box;
  padding: 0 3px 0 2px;
  background: #000;
  color: #c0c0c0;
  font-size: 15px;
  display: flex;
  flex-direction: column;
  overflow: hidden;
}

.quote b {
  font-size: 14px;
  font-weight: 700;
}

.q-head {
  height: 28px;
  flex: none;
}

.q-row {
  height: 19px;
  display: grid;
  grid-template-columns: 36px 55px 39px 60px;
  align-items: center;
  line-height: 19px;
  white-space: nowrap;
}

.q-row b {
  text-align: right;
}

.q-row.top {
  flex: none;
  border-bottom: 1px solid #c00000;
  margin: 0 -3px 0 -2px;
  padding: 0 3px 0 2px;
}

.fund:last-child > span:first-child,
.fund:last-child > .l2 {
  font-size: 13px;
}

.l2 {
  padding-left: 4px;
}

.q-block {
  flex: none;
  padding: 1px 3px 0 2px;
  border-bottom: 1px solid #c00000;
  margin: 0 -3px 0 -2px;
}

.order {
  height: 19px;
  display: grid;
  grid-template-columns: 36px 56px 53px;
  align-items: center;
  line-height: 19px;
}

.order b {
  text-align: right;
}

.ticks {
  padding-top: 1px;
}

.tick {
  height: 18px;
  display: grid;
  grid-template-columns: 50px 58px 62px 20px;
  align-items: center;
  line-height: 18px;
}

.tick b {
  text-align: right;
}

.tick b:first-child {
  text-align: left;
}

.r {
  color: #ff3232;
}

.g {
  color: #00e800;
}

.y {
  color: #d0d000;
}

.m {
  color: #e020e0;
}

.w {
  color: #c0c0c0;
}

.tabs {
  height: 17px;
  display: flex;
  background: repeating-conic-gradient(#3c3c3c 0 25%, #101010 0 50%) 0 0 / 2px 2px;
  border-left: 1px solid #c00000;
  box-sizing: content-box;
  font-size: 11.500px;
  color: #c0c0c0;
  flex: none;
}

.tab {
  flex: none;
  box-sizing: border-box;
  border-right: 1px solid #b00000;
  text-align: center;
  line-height: 17px;
  white-space: nowrap;
  overflow: hidden;
}

.tab.yellow {
  color: #d8d800;
}

.tab.cyan {
  color: #00e8e8;
}

.tab-fill {
  flex: 1;
}

.side-tab {
  width: 24.300px;
  flex: none;
  box-sizing: border-box;
  background: #000;
  border-left: 1px solid #b00000;
  text-align: center;
  line-height: 17px;
  font-size: 13px;
}

.side-tab.on {
  color: #00e8e8;
}

.status {
  height: 24px;
  flex: none;
  display: flex;
  align-items: center;
  padding-bottom: 3px;
  background: #ece9d8;
  color: #111;
  font-size: 15px;
  position: relative;
  box-sizing: border-box;
  border-top: 1px solid #fff;
}

.idx {
  width: 211px;
  display: flex;
  align-items: baseline;
  box-sizing: border-box;
  white-space: nowrap;
  padding-right: 2px;
  border-right: 1px solid #888;
  flex: none;
}

.idx b {
  font-size: 14px;
}

.n1 {
  width: 35px;
  font-size: 15px;
}

.idx .up {
  color: #007000;
}

.v1 {
  width: 64px;
}

.v2 {
  width: 53px;
}

.idx .amt {
  color: #000;
}

.idx:nth-child(2) {
  width: 212px;
}

.idx:nth-child(2) .v1 {
  width: 59px;
}

.idx:nth-child(2) .v2 {
  width: 57px;
}

.idx:nth-child(3) {
  width: 216px;
  border-right: none;
}

.idx:nth-child(3) .v1 {
  width: 63px;
}

.idx:nth-child(3) .v2 {
  width: 52px;
}

.signal {
  margin-left: 0;
  flex: none;
}

.station {
  margin-left: 1px;
  padding-left: 4px;
  border-left: 1px solid #888;
  font-size: 12px;
  flex: none;
  width: 100px;
}

.stat-icons {
  margin-left: auto;
  margin-right: 2px;
}

.taskbar {
  height: 30px;
  flex: none;
  display: flex;
  align-items: center;
  color: #fff;
  background: linear-gradient(#3f83ea 0, #2560d8 10%, #2a6ae2 50%, #2560d8 90%, #1c48b0 100%);
  font-size: 14.500px;
}

.start {
  width: 110px;
  height: 30px;
  flex: none;
  box-sizing: border-box;
  display: flex;
  align-items: center;
  gap: 6px;
  padding-left: 10px;
  background: linear-gradient(#4f9c4e 0, #3c8e3c 20%, #48a048 70%, #2f7a30 100%);
  border-radius: 0 12px 12px 0;
}

.start span {
  font-size: 25px;
  line-height: 28px;
  font-style: italic;
  font-family: 'Noto Sans CJK SC', sans-serif;
}

.quick {
  width: 108px;
  flex: none;
  display: flex;
  align-items: center;
  gap: 6px;
  padding-left: 15px;
  box-sizing: border-box;
}

.chev {
  margin-left: 4px;
  font-size: 13px;
  color: #b0c8f8;
}

.w-mark {
  font: 700 11px 'Liberation Serif', serif;
  fill: #3050b0;
}

.task {
  width: 159px;
  height: 24px;
  flex: none;
  margin-right: 1px;
  box-sizing: border-box;
  display: flex;
  align-items: center;
  gap: 6px;
  padding-left: 8px;
  border-radius: 3px;
  background: #3c81f3;
  box-shadow: inset 1px 1px 0 #6ea4f8;
  white-space: nowrap;
  font-family: 'Liberation Mono', 'Noto Sans CJK SC', monospace;
  font-size: 13.500px;
}

.task.active {
  background: #1e52b7;
  box-shadow: inset 1px 1px 1px #143a88;
}

.desk {
  margin-left: auto;
  margin-right: 36px;
  color: #7fa8e8;
  font-size: 15px;
}

.desk i {
  font-style: normal;
  font-size: 12px;
}

.tray {
  width: 145px;
  height: 30px;
  flex: none;
  display: flex;
  align-items: center;
  gap: 5px;
  padding-left: 11px;
  box-sizing: border-box;
  background: linear-gradient(#22a0e8 0, #1290e0 50%, #0e78cc 100%);
  box-shadow: inset 1px 0 0 #0a4ca0;
}

.clock {
  margin-left: 12px;
  font-size: 14px;
}

.stamp {
  position: absolute;
  left: 1055px;
  top: 10px;
  width: 225px;
  height: 41px;
  background: rgba(128, 128, 128, 0.88);
  border-bottom: 1px solid #d88;
}

.stamp > * {
  position: absolute;
  white-space: nowrap;
}

.stamp-logo {
  left: 3px;
  top: -5px;
  font-size: 19.500px;
  color: #2a34d0;
  font-family: 'Noto Sans CJK SC', sans-serif;
}

.stamp-slogan {
  left: 72px;
  top: -2px;
  font-size: 17px;
  line-height: 22px;
  color: #303030;
}

.stamp-l {
  left: 48px;
  top: 20px;
  width: 13px;
  height: 13px;
  font-size: 10px;
  line-height: 13px;
  text-align: center;
  background: #d8d0d0;
  color: #e02020;
}

.stamp-code {
  left: 66px;
  top: 17px;
  font-size: 14.500px;
  color: #f0e000;
}

.stamp-url {
  left: 2px;
  top: 17px;
  font-size: 23.500px;
  line-height: 26px;
  color: #b01010;
  font-family: 'Liberation Sans', sans-serif;
}
</style>
